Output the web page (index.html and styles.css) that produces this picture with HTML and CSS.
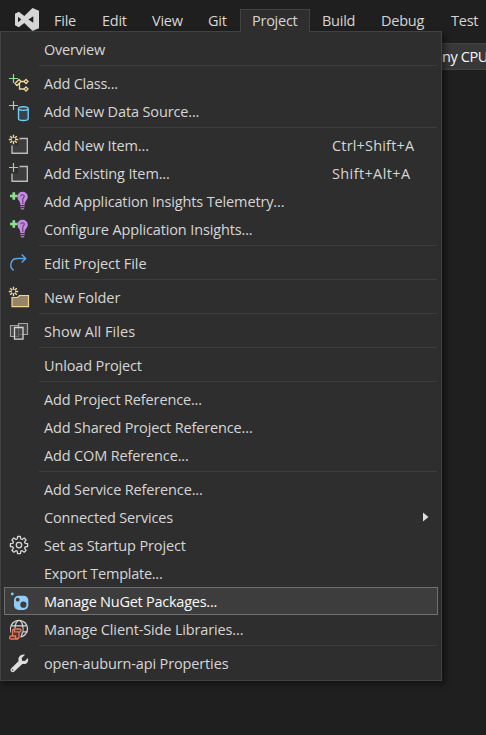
FILE: index.html
```html
<!DOCTYPE html>
<html lang="en">
<head>
<meta charset="utf-8">
<title>Project menu</title>
<link rel="stylesheet" href="styles.css">
</head>
<body>
<svg class="defs" width="0" height="0">
  <defs>
    <path id="plus" d="M9 8.500h9M13.500 4v9" stroke="#8fdf91" stroke-width="1.200" fill="none"/>
    <path id="star" d="M13.500 3.800v3M13.500 10.200v3M8.800 8.500h3M15.200 8.500h3M10.200 5.200l2.100 2.100M14.700 9.700l2.100 2.100M16.800 5.200l-2.100 2.100M12.300 9.700l-2.100 2.100" stroke="#f5dc98" stroke-width="1.400" fill="none"/>
    <path id="box" d="M19.500 7.500h7.800v14.800H12V14.500" fill="none" stroke="#bcbcbc" stroke-width="1.400"/>
    <g id="bulb">
      <path d="M17.200 9.800a5.300 5 0 0 1 10.600 0c0 3.200-3.200 4-3.200 8.200h-4.200c0-4.200-3.200-5-3.200-8.200z" fill="#c78ae2"/>
      <path d="M20.700 9.200c0-2 3.600-2 3.600 0 0 1.300-1.500 1.300-1.500 3v5" fill="none" stroke="#604075" stroke-width="1.100"/>
      <path d="M20.300 19.500h4.400M20.800 21.700h3.400" stroke="#9a79ab" stroke-width="1.500"/>
      <path d="M10 9h7.600M13.800 5.200v7.600" stroke="#2e2e2e" stroke-width="4.500"/>
      <path d="M10 9h7.600M13.800 5.200v7.600" stroke="#8be08f" stroke-width="2.700"/>
    </g>
  </defs>
</svg>

<nav class="menubar">
  <svg class="logo" viewBox="14 7 26 25"><path fill="#d6d6d6" fill-rule="evenodd" d="M32.500 8L39 10.800V28.200L32.500 31L24.300 22.900L18.800 27.200L15 25.300V13.700L18.800 11.800L24.300 16.100ZM33.300 16.200L28.400 19.500L33.300 22.800ZM18 16.700V22.300L21.300 19.500Z"/></svg>
  <span class="tab">File</span>
  <span class="tab">Edit</span>
  <span class="tab">View</span>
  <span class="tab">Git</span>
  <span class="tab project">Project</span>
  <span class="tab build">Build</span>
  <span class="tab">Debug</span>
  <span class="tab">Test</span>
</nav>
<div class="toolbar"><span class="platform">ny CPU</span></div>

<div class="menu">
  <div class="item"><span class="icon"></span><span class="label tight">Overview</span></div>
  <hr>
  <div class="item"><svg class="icon" viewBox="4 0 36 28"><use href="#plus" y="1"/><g fill="none" stroke="#f2d69b" stroke-width="1.300"><path d="M15 14.500l4-4 2 2-4 4zM20.500 12.500h4M19.500 14v6h4.500"/><path d="M26 10.500l2 2-2 2-2-2zM26 18l2 2-2 2-2-2z"/></g></svg><span class="label tight">Add Class...</span></div>
  <div class="item"><svg class="icon" viewBox="4 0 36 28"><use href="#plus"/><g stroke="#72cdf5" stroke-width="1.400"><path d="M18.500 11.800v9.900c0 2.300 9.700 2.300 9.700 0v-9.900" fill="#36454d"/><ellipse cx="23.350" cy="11.600" rx="4.850" ry="1.800" fill="#36454d"/></g></svg><span class="label">Add New Data Source...</span></div>
  <hr>
  <div class="item"><svg class="icon" viewBox="4 0 36 28"><path d="M13 14.500h5V8h8.500v13.500H13z" fill="#3d3d3d"/><use href="#box"/><use href="#star"/></svg><span class="label">Add New Item...</span><span class="shortcut">Ctrl+Shift+A</span></div>
  <div class="item"><svg class="icon" viewBox="4 0 36 28"><path d="M13 14.500h5V8h8.500v13.500H13z" fill="#3d3d3d"/><use href="#box"/><use href="#plus"/></svg><span class="label">Add Existing Item...</span><span class="shortcut alt">Shift+Alt+A</span></div>
  <div class="item"><svg class="icon" viewBox="4 0 36 28"><use href="#bulb"/></svg><span class="label">Add Application Insights Telemetry...</span></div>
  <div class="item"><svg class="icon" viewBox="4 0 36 28"><use href="#bulb"/></svg><span class="label">Configure Application Insights...</span></div>
  <hr>
  <div class="item"><svg class="icon" viewBox="4 0 36 28"><path d="M13.700 21.300c-4.500-2.800-4-11.800 4-11.800h8M21.700 5.500l4 4-4 4" fill="none" stroke="#58a6e8" stroke-width="1.400"/></svg><span class="label loose">Edit Project File</span></div>
  <hr>
  <div class="item"><svg class="icon" viewBox="4 0 36 28"><path d="M12 14.500h5.500l2-2h9v11.200H12z" fill="#938565" stroke="#f2d690" stroke-width="1.200"/><use href="#star"/></svg><span class="label loose">New Folder</span></div>
  <hr>
  <div class="item"><svg class="icon" viewBox="4 0 36 28"><g fill="#444"><path d="M18.500 6.500h9v11h-9z" stroke="#a5a5a5" stroke-width="1.200"/><path d="M10.500 8.500h8v11h-8z" stroke="#a5a5a5" stroke-width="1.200"/><path d="M14.500 10.500h8.500v11.700h-8.500z" stroke="#d6d6d6" stroke-width="1.300" fill-opacity=".7"/></g></svg><span class="label looser">Show All Files</span></div>
  <hr>
  <div class="item"><span class="icon"></span><span class="label">Unload Project</span></div>
  <hr>
  <div class="item"><span class="icon"></span><span class="label">Add Project Reference...</span></div>
  <div class="item"><span class="icon"></span><span class="label">Add Shared Project Reference...</span></div>
  <div class="item"><span class="icon"></span><span class="label">Add COM Reference...</span></div>
  <hr>
  <div class="item"><span class="icon"></span><span class="label">Add Service Reference...</span></div>
  <div class="item"><span class="icon"></span><span class="label">Connected Services</span><svg class="arrow" viewBox="0 0 6 10"><path d="M0 .5L5.500 5L0 9.500z" fill="#dedede"/></svg></div>
  <div class="item"><svg class="icon" viewBox="4 0 36 28"><g fill="none" stroke="#d6d6d6" stroke-width="1.300" stroke-linejoin="round"><path d="M17.600 5.500h2.800l.4 2.500 1.300.5 2.100-1.500 1.900 1.900-1.500 2.100.5 1.300 2.500.4v2.800l-2.500.4-.5 1.300 1.500 2.100-1.900 1.900-2.100-1.500-1.300.5-.4 2.500h-2.800l-.4-2.500-1.300-.5-2.100 1.500-1.900-1.900 1.500-2.100-.5-1.300-2.500-.4v-2.800l2.500-.4.5-1.300-1.500-2.100 1.900-1.900 2.100 1.500 1.300-.5z"/><circle cx="19" cy="14.100" r="2.700"/></g></svg><span class="label">Set as Startup Project</span></div>
  <div class="item"><span class="icon"></span><span class="label tight">Export Template...</span></div>
  <div class="item selected"><svg class="icon" viewBox="4 0 36 28"><circle cx="12.300" cy="7" r="1.400" fill="#83c8f6"/><rect x="14" y="8.700" width="14.300" height="14.300" rx="4.700" fill="#91cdf7"/><circle cx="17.700" cy="12.700" r="1.900" fill="#3d3d3d"/><circle cx="23.400" cy="17.700" r="3.100" fill="#3d3d3d"/></svg><span class="label tight">Manage NuGet Packages...</span></div>
  <div class="item"><svg class="icon" viewBox="4 0 36 28"><g fill="none" stroke="#d6d6d6" stroke-width="1.300"><circle cx="19" cy="13.800" r="8.500"/><ellipse cx="19" cy="13.800" rx="4" ry="8.500"/><path d="M11.500 10.800h15M10.500 16.800h17"/></g><path d="M12 14h9.500v2.500h-2v7.500h-10v-3.500H12z" fill="#2e2e2e" stroke="#2e2e2e" stroke-width="2"/><path d="M12.500 20.500V16c0-2 1-2 2-2h5.500c1.500 0 1.500 2.800 0 2.800h-1v5c0 2-1 2.200-2 2.200h-6c-2 0-1.800-3 0-3h4.500v1.500c0 1.500 2 1.500 2 0M14.500 14.500v2.300H19" fill="#54372f" stroke="#e9785c" stroke-width="1.300"/></svg><span class="label">Manage Client-Side Libraries...</span></div>
  <hr>
  <div class="item"><svg class="icon" viewBox="4 0 36 28"><path d="M25 5.700l-3.300 3.300 .3 2.800 2.800.3 3.100-3.200c1.200 4-1.800 7-5.600 6L14.300 22.600c-2 1.800-5-.8-3.200-3L18.700 12c-1.200-4 2.200-7.400 6.300-6.300z" fill="#dedede"/><circle cx="12.600" cy="21" r=".8" fill="#2e2e2e"/></svg><span class="label">open-auburn-api Properties</span></div>
</div>
</body>
</html>
```
FILE: styles.css
```css
* { box-sizing: border-box; }
body {
  margin: 0;
  width: 486px;
  height: 735px;
  overflow: hidden;
  position: relative;
  background: #1f1f1f;
  color: #d6d6d6;
  font: 14.5px/20px "Open Sans", "Noto Sans", sans-serif;
  letter-spacing: -0.25px;
  white-space: nowrap;
}
.defs { position: absolute; }
.menubar {
  display: grid;
  grid-template-columns: 54px 48px 50px 56px 32px 70px 71px 70px 35px;
  height: 43px;
  align-items: start;
}
.logo { width: 26px; height: 25px; margin: 7px 0 0 14px; }
.tab { margin-top: 9px; height: 23px; padding-top: 2px; }
.project {
  position: relative;
  z-index: 2;
  background: #2e2e2e;
  border: 1px solid #424242;
  border-bottom: 0;
  padding: 1px 0 0 11px;
}
.build { padding-left: 12px; }
.toolbar {
  display: flex;
  height: 27px;
  margin-left: 400px;
  padding: 3px 0 0 42px;
  background: #383838;
  border: solid #424242;
  border-width: 1px 0;
  color: #fafafa;
}
.platform { letter-spacing: -0.4px; }
.menu {
  position: absolute;
  left: 0;
  top: 31px;
  width: 442px;
  height: 650px;
  padding: 3px;
  background: #2e2e2e;
  border: 1px solid #424242;
  box-shadow: 3px 3px 6px rgba(0, 0, 0, .45);
}
.item {
  display: flex;
  align-items: center;
  height: 28px;
  width: 434px;
}
.icon { flex: none; width: 36px; height: 28px; }
.label {
  flex: none;
  width: 288px;
  margin-left: 4px;
  padding-top: 2px;
  letter-spacing: -0.14px;
}
.tight { letter-spacing: -0.25px; }
.loose { letter-spacing: -0.06px; }
.looser { letter-spacing: 0.03px; }
.shortcut { padding-top: 2px; letter-spacing: 0.18px; }
.alt { letter-spacing: 0.38px; }
.arrow { width: 6px; height: 10px; margin-left: 91px; }
.selected {
  background: #3d3d3d;
  box-shadow: inset 0 0 0 1px #707070;
  color: #fafafa;
}
hr {
  height: 1px;
  margin: 2px 1px 3px 35px;
  border: 0;
  background: #3d3d3d;
}
```
